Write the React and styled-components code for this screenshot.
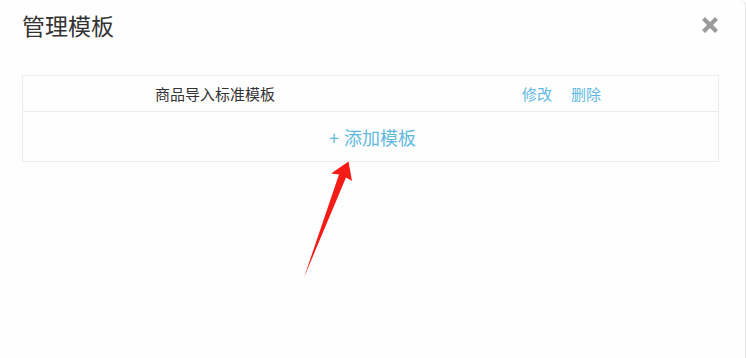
import React from 'react';
import styled, { createGlobalStyle } from 'styled-components';

const GlobalStyle = createGlobalStyle`
  html, body {
    margin: 0;
    padding: 0;
    background: #ffffff;
  }
  body {
    font-family: "Noto Sans CJK SC", "Noto Sans", sans-serif;
  }
`;

const Modal = styled.div`
  position: relative;
  box-sizing: border-box;
  width: 746px;
  height: 358px;
  background: #fefefe;
  border-right: 1px solid #e2e2e2;
  border-top-right-radius: 6px;
  display: flex;
  flex-direction: column;
  overflow: hidden;
`;

const Header = styled.div`
  display: flex;
  justify-content: space-between;
  align-items: flex-start;
  padding: 12px 27px 0 22px;
`;

const Title = styled.h4`
  margin: 0;
  font-size: 23px;
  line-height: 26px;
  font-weight: 400;
  color: #333;
`;

const CloseButton = styled.button`
  margin-top: 5px;
  padding: 0;
  border: 0;
  background: none;
  width: 16px;
  height: 16px;
  display: flex;
  cursor: pointer;
`;

const Body = styled.div`
  padding: 37px 0 0 22px;
`;

const Table = styled.div`
  width: 697px;
  box-sizing: border-box;
  border: 1px solid #ececec;
`;

const Row = styled.div`
  display: grid;
  grid-template-columns: 384px 1fr;
  height: ${(p) => p.$height}px;
  align-items: center;
  border-bottom: ${(p) => (p.$last ? 'none' : '1px solid #ececec')};
`;

const Cell = styled.div`
  text-align: center;
  font-size: 15px;
  color: #333;
  grid-column: ${(p) => (p.$span ? '1 / -1' : 'auto')};
`;

const Actions = styled.div`
  display: flex;
  justify-content: center;
  gap: 19px;
  padding-right: 2px;
`;

const Link = styled.a`
  font-size: 15px;
  color: #62b9e0;
  text-decoration: none;
  cursor: pointer;
`;

const AddLink = styled(Link)`
  font-size: 18px;
  margin-left: 4px;
`;

const Plus = styled.span`
  margin-right: 5px;
`;

const Arrow = styled.svg`
  position: absolute;
  left: 0;
  top: 0;
  pointer-events: none;
`;

export default function App() {
  return (
    <>
      <GlobalStyle />
      <Modal>
        <Header>
          <Title>管理模板</Title>
          <CloseButton aria-label="close">
            <svg width="16" height="16" viewBox="0 0 16 16">
              <path
                d="M3 0 L8 5 L13 0 L16 3 L11 8 L16 13 L13 16 L8 11 L3 16 L0 13 L5 8 L0 3 Z"
                fill="#9b9b9b"
              />
            </svg>
          </CloseButton>
        </Header>
        <Body>
          <Table>
            <Row $height={35}>
              <Cell>商品导入标准模板</Cell>
              <Actions>
                <Link>修改</Link>
                <Link>删除</Link>
              </Actions>
            </Row>
            <Row $height={49} $last>
              <Cell $span>
                <AddLink>
                  <Plus>+</Plus>添加模板
                </AddLink>
              </Cell>
            </Row>
          </Table>
        </Body>
        <Arrow width="746" height="358" viewBox="0 0 746 358">
          <polygon
            points="348.5,161.5 352,181 346,177.5 304,277.5 339,174.5 331,173.5"
            fill="#f51c17"
          />
        </Arrow>
      </Modal>
    </>
  );
}
